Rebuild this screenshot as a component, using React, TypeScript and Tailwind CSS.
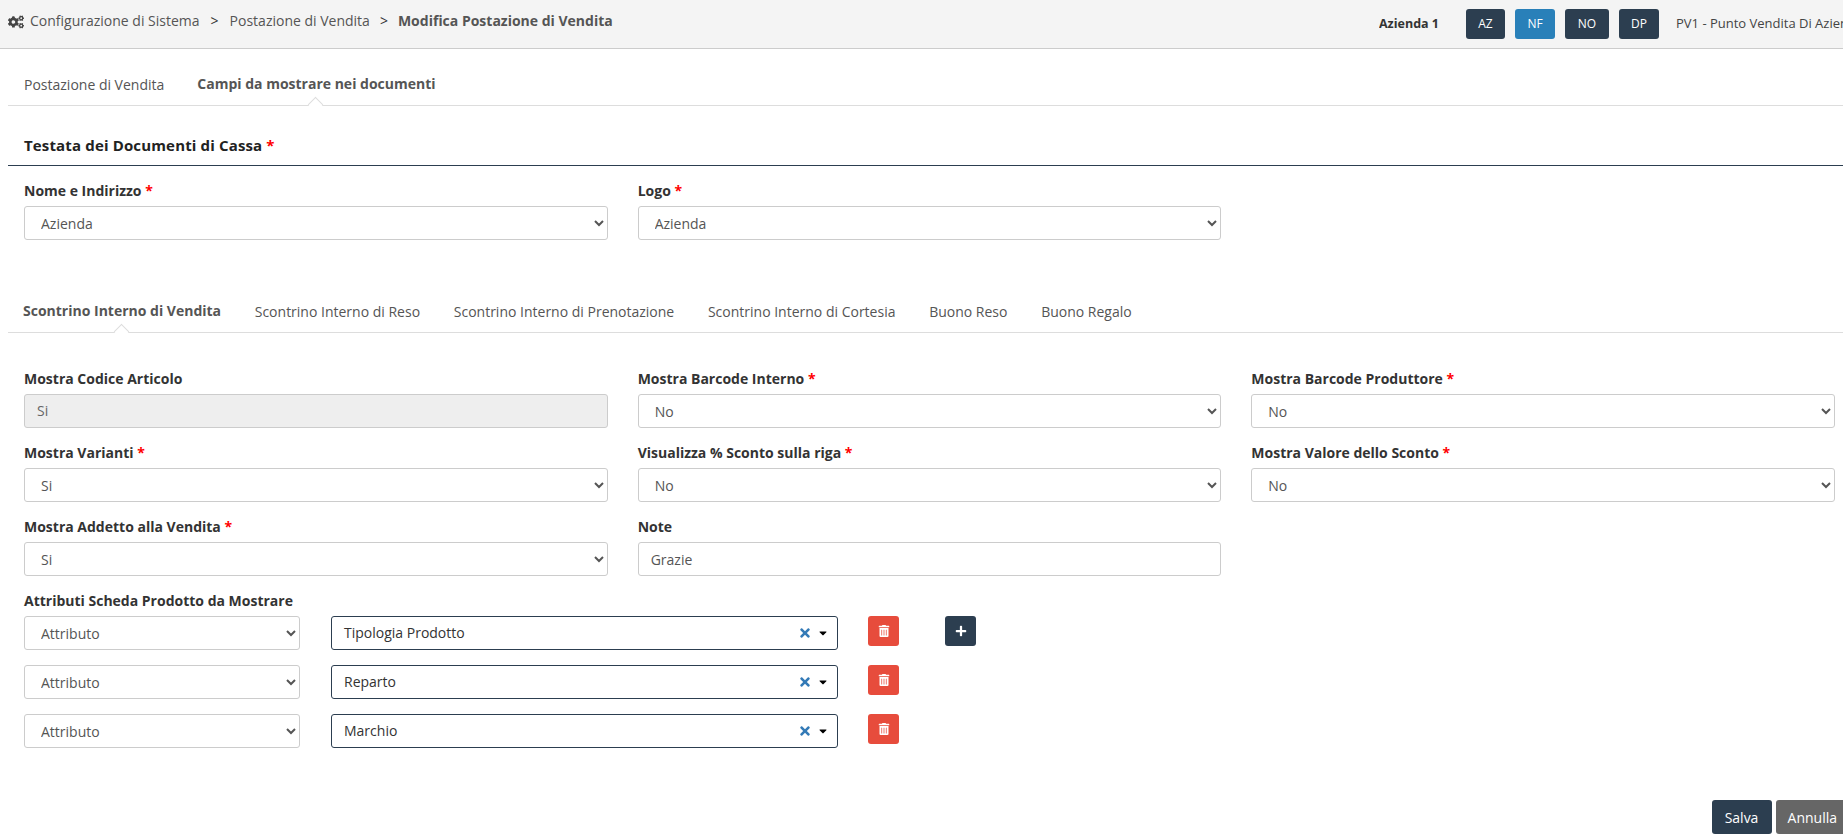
import { FaCaretDown, FaCogs, FaPlus, FaTimes, FaTrashAlt } from "react-icons/fa";

const selectBase =
  "block h-[34px] rounded-[3px] border border-[#ccc] bg-white px-3 text-[14px] text-[#555] outline-none";

const labelCls = "pt-px mb-[6px] text-[14px] leading-[18px] font-bold text-[#333]";

function Req() {
  return <span className="text-[#f00]"> *</span>;
}

function Tab({ label, active }: { label: string; active?: boolean }) {
  if (!active) {
    return <div className="pb-[11px] leading-[18px] text-[14px] text-[#555]">{label}</div>;
  }
  return (
    <div className="relative pb-[12px] leading-[18px] text-[14px] font-bold text-[#555]">
      {label}
      <span className="absolute bottom-[-5px] left-1/2 -ml-[6px] h-[11px] w-[11px] rotate-45 border-l border-t border-[#ddd] bg-white"></span>
    </div>
  );
}

function Field({ label, required, value, disabled }: { label: string; required?: boolean; value?: string; disabled?: boolean }) {
  return (
    <div className="pb-[15px]">
      <div className={labelCls}>
        {label}
        {required && <Req />}
      </div>
      {disabled ? (
        <div className="flex h-[34px] items-center rounded-[3px] border border-[#ccc] bg-[#eee] px-3 pb-px text-[14px] text-[#666]">{value}</div>
      ) : (
        <select className={selectBase + " w-full"} defaultValue={value}>
          <option>{value}</option>
        </select>
      )}
    </div>
  );
}

function AttrRow({ value, plus }: { value: string; plus?: boolean }) {
  return (
    <div className="mb-[15px] flex h-[34px]">
      <select className={selectBase + " w-[276px] shrink-0"} defaultValue="Attributo">
        <option>Attributo</option>
      </select>
      <div className="ml-[31px] flex h-[34px] w-[507px] shrink-0 items-center rounded-[3px] border border-[#2c3e50] bg-white pb-px pl-3 pr-2 text-[14px] text-[#333]">
        <span className="flex-1">{value}</span>
        <FaTimes className="mr-[5px] text-[14px] text-[#337ab7]" />
        <FaCaretDown className="text-[12px] text-black" />
      </div>
      <button className="ml-[30px] flex h-[30px] w-[31px] items-center justify-center rounded-[3px] bg-[#e74c3c] text-white">
        <FaTrashAlt className="text-[12px]" />
      </button>
      {plus && (
        <button className="ml-[46px] flex h-[30px] w-[31px] items-center justify-center rounded-[3px] bg-[#2c3e50] text-white">
          <FaPlus className="text-[12px]" />
        </button>
      )}
    </div>
  );
}

export default function App() {
  return (
    <div className="h-screen w-full overflow-hidden bg-white font-['Open_Sans',sans-serif]">
      <header className="flex h-[49px] border-b border-[#ccc] bg-[#f4f4f4]">
        <div className="flex flex-1 items-start pl-2 pt-[12px] text-[14px] leading-[18px] text-[#555]">
          <FaCogs className="mt-[2px] mr-[6px] text-[16px] text-[#444]" />
          <span>Configurazione di Sistema</span>
          <span className="mx-[11px] text-[#333]">&gt;</span>
          <span>Postazione di Vendita</span>
          <span className="mx-[10px] text-[#333]">&gt;</span>
          <span className="font-bold">Modifica Postazione di Vendita</span>
        </div>
        <div className="flex w-[464px] shrink-0 items-center overflow-hidden whitespace-nowrap">
          <span className="w-[87px] shrink-0 text-[12.5px] font-bold text-[#333]">Azienda 1</span>
          <button className="h-[30px] w-[39px] shrink-0 rounded-[3px] bg-[#2c3e50] text-[12px] text-white">AZ</button>
          <button className="ml-[10px] h-[30px] w-[40px] shrink-0 rounded-[3px] bg-[#2980b9] text-[12px] text-white">NF</button>
          <button className="ml-[10px] h-[30px] w-[44px] shrink-0 rounded-[3px] bg-[#2c3e50] text-[12px] text-white">NO</button>
          <button className="ml-[10px] h-[30px] w-[40px] shrink-0 rounded-[3px] bg-[#2c3e50] text-[12px] text-white">DP</button>
          <span className="ml-[17px] text-[13px] text-[#444]">PV1 - Punto Vendita Di Azienda 1</span>
        </div>
      </header>

      <nav className="ml-2 flex h-[57px] items-end gap-[33px] border-b border-[#ddd] pl-4">
        <Tab label="Postazione di Vendita" />
        <Tab label="Campi da mostrare nei documenti" active />
      </nav>

      <div className="ml-2 flex h-[60px] items-end border-b border-[#2c3e50] pb-[10px] pl-4 text-[15px] leading-[20px] font-bold tracking-[0.15px] text-[#222]">
        <span>
          Testata dei Documenti di Cassa
          <Req />
        </span>
      </div>

      <div className="mt-[15px] grid grid-cols-[583.67px_583.67px_583.67px] gap-x-[30px] pl-6">
        <div>
          <div className={labelCls}>
            Nome e Indirizzo
            <Req />
          </div>
          <select className={selectBase + " w-full"} defaultValue="Azienda">
            <option>Azienda</option>
          </select>
        </div>
        <div>
          <div className={labelCls}>
            Logo
            <Req />
          </div>
          <select className={selectBase + " w-full"} defaultValue="Azienda">
            <option>Azienda</option>
          </select>
        </div>
      </div>

      <nav className="ml-2 mt-[36px] flex h-[57px] items-end gap-[33.7px] border-b border-[#ddd] pl-[15px]">
        <Tab label="Scontrino Interno di Vendita" active />
        <Tab label="Scontrino Interno di Reso" />
        <Tab label="Scontrino Interno di Prenotazione" />
        <Tab label="Scontrino Interno di Cortesia" />
        <Tab label="Buono Reso" />
        <Tab label="Buono Regalo" />
      </nav>

      <div className="mt-[36px] pl-6">
        <div className="grid grid-cols-[583.67px_583.67px_583.67px] gap-x-[30px]">
          <Field label="Mostra Codice Articolo" value="Si" disabled />
          <Field label="Mostra Barcode Interno" required value="No" />
          <Field label="Mostra Barcode Produttore" required value="No" />
          <Field label="Mostra Varianti" required value="Si" />
          <Field label="Visualizza % Sconto sulla riga" required value="No" />
          <Field label="Mostra Valore dello Sconto" required value="No" />
          <Field label="Mostra Addetto alla Vendita" required value="Si" />
          <div className="pb-[15px]">
            <div className={labelCls}>Note</div>
            <input readOnly value="Grazie" className="block h-[34px] w-full rounded-[3px] border border-[#ccc] bg-white px-3 text-[14px] text-[#555] outline-none" />
          </div>
        </div>
        <div className={labelCls}>Attributi Scheda Prodotto da Mostrare</div>
        <AttrRow value="Tipologia Prodotto" plus />
        <AttrRow value="Reparto" />
        <AttrRow value="Marchio" />
      </div>

      <div className="mt-[52px] flex justify-end gap-1 -mr-[6px]">
        <button className="h-[34px] w-[60px] rounded-[3px] bg-[#2c3e50] text-[14px] text-white">Salva</button>
        <button className="h-[34px] rounded-[3px] bg-[#666] px-3 text-[14px] text-white">Annulla</button>
      </div>
    </div>
  );
}
